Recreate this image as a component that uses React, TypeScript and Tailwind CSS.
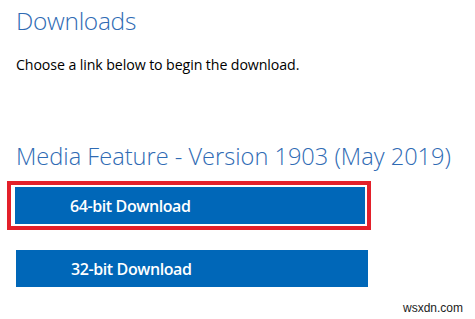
const App = () => {
  return (
    <div className="relative w-[475px] h-[319px] bg-white overflow-hidden font-['Open_Sans',sans-serif]">
      <div className="flex flex-col pl-4">
        <h1 className="mt-[4px] text-[24.5px] leading-[34px] font-light text-[#2f6bb4] tracking-[-0.3px]">
          Downloads
        </h1>
        <p className="mt-[17px] text-[14.2px] leading-[20px] text-black tracking-[-0.1px]">
          Choose a link below to begin the download.
        </p>
        <h2 className="mt-[66px] text-[23.6px] leading-[30px] font-light text-[#2f6bb4] whitespace-nowrap">
          Media Feature - Version 1903 (May 2019)
        </h2>
      </div>

      <div className="ml-[7px] mt-[10px] w-[364px] border-4 border-[#e3202a] p-[2px] pl-[4px]">
        <button className="flex items-center w-full h-[37px] bg-[#0067b8] pl-[55px] text-white text-[16px] font-semibold tracking-[-0.4px]">
          64-bit Download
        </button>
      </div>

      <div className="ml-4 mt-[20px]">
        <button className="flex items-center w-[352px] h-[37px] bg-[#0067b8] pl-[55px] text-white text-[16px] font-semibold tracking-[-0.4px]">
          32-bit Download
        </button>
      </div>

      <span className="absolute right-[12px] bottom-[2px] text-[12px] text-[#222] font-['Liberation_Sans',sans-serif]">
        wsxdn.com
      </span>
    </div>
  );
};

export default App;
